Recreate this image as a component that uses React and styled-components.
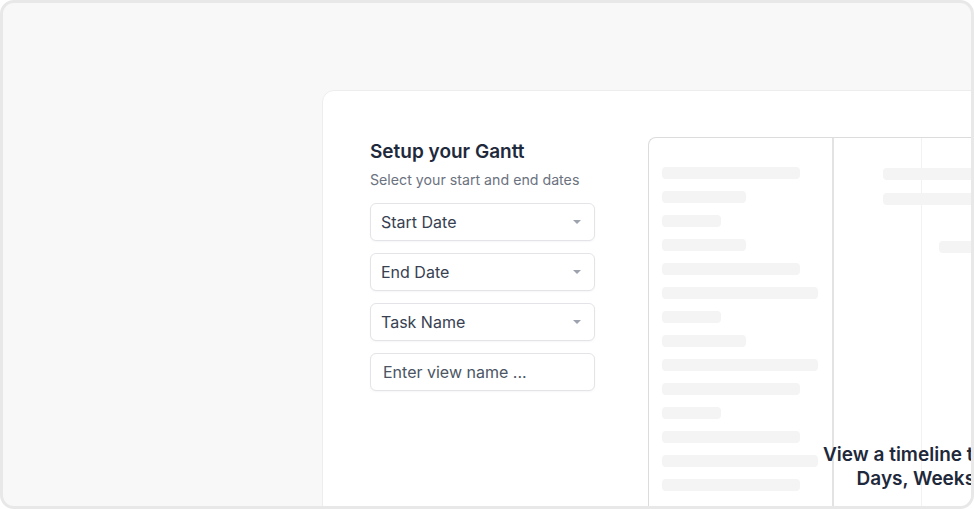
import React from "react";
import styled, { createGlobalStyle } from "styled-components";

const GlobalStyle = createGlobalStyle`
  * { box-sizing: border-box; }
  body {
    margin: 0;
    font-family: Inter, "Noto Sans", sans-serif;
    background: #ffffff;
  }
`;

const leftBars = [138, 84, 59, 84, 138, 156, 59, 84, 156, 138, 59, 138, 156, 138];

const App = () => {
  return (
    <>
      <GlobalStyle />
      <Frame>
        <Card>
          <Form>
            <Title>Setup your Gantt</Title>
            <Subtitle>Select your start and end dates</Subtitle>
            <Fields>
              <Select>
                Start Date
                <Caret />
              </Select>
              <Select>
                End Date
                <Caret />
              </Select>
              <Select>
                Task Name
                <Caret />
              </Select>
              <Input placeholder="Enter view name ..." />
            </Fields>
          </Form>
          <Preview>
            <TaskColumn>
              {leftBars.map((w, i) => (
                <Bar key={i} style={{ width: w }} />
              ))}
            </TaskColumn>
            <Timeline>
              <TimelineBar $left={49} $top={30} />
              <TimelineBar $left={49} $top={55} />
              <TimelineBar $left={105} $top={103} />
            </Timeline>
            <Caption>
              View a timeline that spans all
              <br />
              Days, Weeks, Months
            </Caption>
          </Preview>
        </Card>
      </Frame>
    </>
  );
};

const Frame = styled.div`
  width: 974px;
  height: 509px;
  border: 3px solid #e8e8e8;
  border-radius: 14px;
  background: #f8f8f8;
  overflow: hidden;
  padding: 87px 0 0 319px;
`;

const Card = styled.div`
  width: 800px;
  height: 600px;
  background: #fff;
  border: 1px solid #ededed;
  border-radius: 12px;
  display: flex;
  align-items: flex-start;
  padding: 46px 0 0 47px;
`;

const Form = styled.div`
  width: 225px;
  margin: 2px 53px 0 0;
  display: flex;
  flex-direction: column;
`;

const Title = styled.h2`
  margin: 0;
  font-size: 19px;
  line-height: 26px;
  font-weight: 600;
  color: #1e293b;
`;

const Subtitle = styled.p`
  margin: 6px 0 0;
  font-size: 14.2px;
  line-height: 18px;
  color: #6b7280;
`;

const Fields = styled.div`
  display: flex;
  flex-direction: column;
  gap: 12px;
  margin-top: 14px;
`;

const Select = styled.div`
  height: 38px;
  display: flex;
  align-items: center;
  justify-content: space-between;
  padding: 0 13px 0 10px;
  border: 1px solid #e3e4e8;
  border-radius: 6px;
  box-shadow: 0 1px 2px rgba(0, 0, 0, 0.04);
  font-size: 16px;
  color: #374151;
  background: #fff;
`;

const Caret = styled.span`
  width: 0;
  height: 0;
  border-left: 4px solid transparent;
  border-right: 4px solid transparent;
  border-top: 4px solid #9ca3af;
`;

const Input = styled.input`
  height: 38px;
  padding: 0 12px;
  border: 1px solid #e3e4e8;
  border-radius: 6px;
  box-shadow: 0 1px 2px rgba(0, 0, 0, 0.04);
  font-family: inherit;
  font-size: 16px;
  outline: none;
  &::placeholder {
    color: #4b5563;
  }
`;

const Preview = styled.div`
  position: relative;
  flex: 1;
  height: 420px;
  display: flex;
  border: 1px solid #dcdcdc;
  border-right: none;
  border-bottom: none;
  border-top-left-radius: 8px;
`;

const TaskColumn = styled.div`
  width: 185px;
  padding: 29px 0 0 13px;
  display: flex;
  flex-direction: column;
  gap: 12px;
  border-right: 2px solid #e3e3e3;
`;

const Bar = styled.div`
  height: 12px;
  border-radius: 4px;
  background: #f4f4f4;
`;

const Timeline = styled.div`
  position: relative;
  flex: 1;
  &::before {
    content: "";
    position: absolute;
    left: 87px;
    top: 0;
    bottom: 0;
    width: 1px;
    background: #f2f2f2;
  }
`;

const TimelineBar = styled.div`
  position: absolute;
  left: ${(p) => p.$left}px;
  top: ${(p) => p.$top}px;
  width: 200px;
  height: 12px;
  border-radius: 4px;
  background: #f4f4f4;
`;

const Caption = styled.div`
  position: absolute;
  left: 174px;
  top: 305px;
  white-space: nowrap;
  text-align: center;
  font-size: 19px;
  line-height: 24px;
  font-weight: 600;
  color: #1e293b;
`;

export default App;
